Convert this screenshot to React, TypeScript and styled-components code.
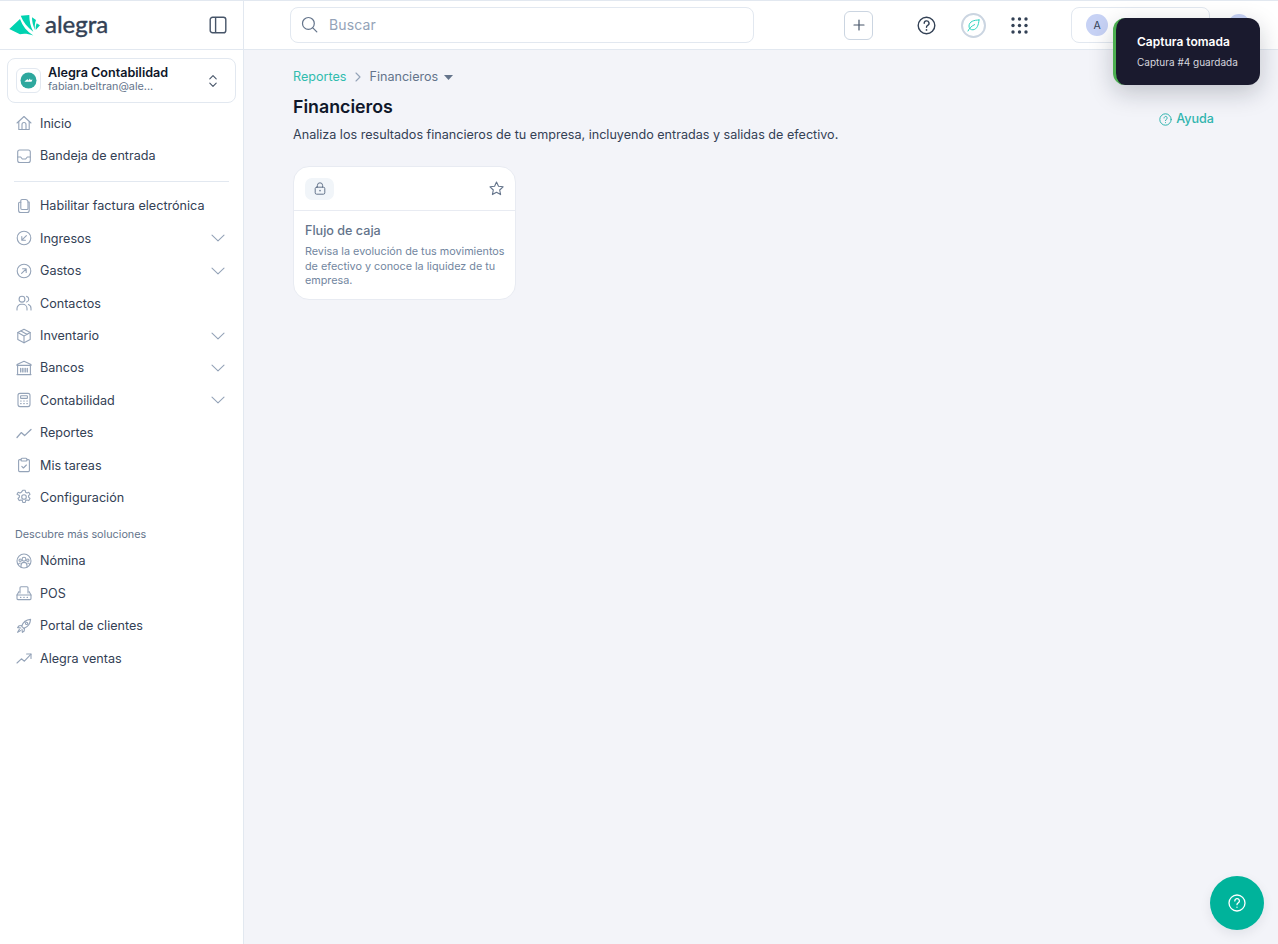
import React from "react";
import styled, { createGlobalStyle } from "styled-components";

const Global = createGlobalStyle`
  html, body { margin: 0; padding: 0; height: 100%; background: #f3f4f9; }
  body { font-family: Inter, "Liberation Sans", sans-serif; color: #334155; }
  * { box-sizing: border-box; }
  #root { height: 100%; }
`;

const Page = styled.div`
  position: relative;
  display: grid;
  grid-template-columns: 244px 1fr;
  height: 944px;
  overflow: hidden;
  border-top: 1px solid #e2e8f0;
`;

const Sidebar = styled.aside`
  background: #fff;
  border-right: 1px solid #e2e8f0;
  display: flex;
  flex-direction: column;
`;

const Brand = styled.div`
  height: 49px;
  flex: none;
  border-bottom: 1px solid #e2e8f0;
  display: flex;
  align-items: center;
  justify-content: space-between;
  padding: 0 16px 0 9px;
`;

const Logo = styled.div`
  display: flex;
  align-items: center;
  gap: 4px;
`;

const Wordmark = styled.span`
  font-family: Lato, sans-serif;
  font-size: 24px;
  font-weight: 400;
  color: #334155;
  line-height: 1;
  margin-top: -3px;
  -webkit-text-stroke: 0.4px #334155;
`;

const Company = styled.div`
  margin: 8px 7px 4px;
  height: 45px;
  border: 1px solid #e2e8f0;
  border-radius: 8px;
  display: flex;
  align-items: center;
  padding: 0 17px 0 8px;
  gap: 7px;
`;

const CompanyBadge = styled.div`
  width: 25px;
  height: 25px;
  border: 1px solid #e2e8f0;
  border-radius: 6px;
  display: flex;
  align-items: center;
  justify-content: center;
  flex: none;
`;

const CompanyText = styled.div`
  flex: 1;
  min-width: 0;
  display: flex;
  flex-direction: column;
  padding-bottom: 1px;
`;

const CompanyName = styled.span`
  font-size: 12.6px;
  font-weight: 600;
  line-height: 14px;
  color: #0f172a;
`;

const CompanyMail = styled.span`
  font-size: 10.8px;
  line-height: 13.5px;
  color: #64748b;
`;

const Row = styled.div`
  height: 32.4px;
  flex: none;
  display: flex;
  align-items: center;
  padding: 0 18px 0 16px;
  font-size: 12.6px;
  color: #334155;
`;

const RowIcon = styled.span`
  width: 16px;
  height: 16px;
  display: flex;
  align-items: center;
  justify-content: center;
  margin-right: 8px;
  flex: none;
  color: #94a3b8;
`;

const RowLabel = styled.span`
  flex: 1;
`;

const Divider = styled.hr`
  border: 0;
  border-top: 1px solid #e2e8f0;
  margin: 9px 14px 8px;
`;

const SectionLabel = styled.div`
  font-size: 10.8px;
  line-height: 14px;
  color: #64748b;
  padding: 14px 15px 3px;
`;

const Main = styled.main`
  display: flex;
  flex-direction: column;
  min-width: 0;
`;

const TopBar = styled.header`
  height: 49px;
  flex: none;
  background: #fff;
  border-bottom: 1px solid #e2e8f0;
  display: flex;
  align-items: center;
  padding-left: 46px;
`;

const Search = styled.div`
  width: 464px;
  height: 36px;
  border: 1px solid #e2e8f0;
  border-radius: 8px;
  display: flex;
  align-items: center;
  padding: 0 0 1px 10px;
  gap: 11px;
  font-size: 14px;
  color: #94a3b8;
  letter-spacing: 0.01em;
`;

const AddButton = styled.button`
  width: 29px;
  height: 29px;
  margin-left: 90px;
  padding: 0;
  border: 1px solid #cbd5e1;
  border-radius: 6px;
  background: #fff;
  color: #475569;
  display: flex;
  align-items: center;
  justify-content: center;
`;

const TopIcon = styled.span<{ $left: number }>`
  margin-left: ${(p) => p.$left}px;
  display: flex;
  align-items: center;
  justify-content: center;
`;

const LeafRing = styled.span`
  width: 25px;
  height: 25px;
  margin-left: 25px;
  border-radius: 50%;
  border: 2px solid #cbd5e1;
  display: flex;
  align-items: center;
  justify-content: center;
`;

const AccountBox = styled.div`
  width: 139px;
  height: 36px;
  margin-left: 43px;
  border: 1px solid #e2e8f0;
  border-radius: 8px;
  display: flex;
  align-items: center;
  padding-left: 14px;
`;

const Avatar = styled.span`
  width: 22px;
  height: 22px;
  border-radius: 50%;
  background: #c7d2f5;
  color: #334155;
  font-size: 10.5px;
  font-weight: 400;
  display: flex;
  align-items: center;
  justify-content: center;
`;

const UserAvatar = styled(Avatar)`
  margin-left: 18px;
`;

const Content = styled.div`
  padding: 19px 64px 0 49px;
`;

const Breadcrumb = styled.nav`
  display: flex;
  align-items: center;
  font-size: 12.6px;
  line-height: 16px;
  height: 16px;
`;

const CrumbLink = styled.span`
  color: #30bcae;
`;

const CrumbCurrent = styled.span`
  color: #64748b;
`;

const CrumbSep = styled.span`
  margin: 0 6.5px;
  display: flex;
  color: #94a3b8;
`;

const Title = styled.h1`
  margin: 10px 0 0;
  font-size: 17.8px;
  line-height: 24px;
  font-weight: 600;
  color: #0f172a;
`;

const DescRow = styled.div`
  display: flex;
  align-items: flex-start;
  justify-content: space-between;
`;

const Desc = styled.p`
  margin: 7px 0 0;
  font-size: 12.6px;
  line-height: 18px;
  color: #334155;
`;

const Help = styled.a`
  display: flex;
  align-items: center;
  gap: 4px;
  margin-top: -9px;
  font-size: 12.6px;
  font-weight: 500;
  line-height: 18px;
  color: #30b4ae;
`;

const Card = styled.article`
  margin-top: 22px;
  width: 223px;
  height: 134px;
  background: #fff;
  border: 1px solid #e8ebf2;
  border-radius: 16px;
  display: flex;
  flex-direction: column;
`;

const CardHead = styled.div`
  height: 44px;
  flex: none;
  border-bottom: 1px solid #e8ebf2;
  display: flex;
  align-items: center;
  justify-content: space-between;
  padding: 0 11px;
`;

const LockPill = styled.span`
  width: 29px;
  height: 22px;
  border-radius: 7px;
  background: #f1f5f9;
  display: flex;
  align-items: center;
  justify-content: center;
  color: #64748b;
`;

const Star = styled.span`
  display: flex;
  color: #64748b;
`;

const CardBody = styled.div`
  padding: 11px 10px 0 11px;
`;

const CardTitle = styled.h3`
  margin: 0;
  font-size: 12.6px;
  line-height: 18px;
  font-weight: 500;
  color: #64748b;
`;

const CardText = styled.p`
  margin: 5px 0 0;
  font-size: 10.8px;
  line-height: 14.6px;
  color: #7286a0;
`;

const Toast = styled.div`
  position: absolute;
  left: 1113px;
  top: 17px;
  width: 147px;
  height: 67px;
  background: #1a1a2e;
  border-left: 3px solid #4caf50;
  border-radius: 12px;
  padding: 15px 0 0 21px;
  box-shadow: 0 8px 24px rgba(15, 23, 42, 0.22);
`;

const ToastTitle = styled.div`
  font-size: 12px;
  line-height: 18px;
  font-weight: 600;
  color: #fff;
  white-space: nowrap;
`;

const ToastText = styled.div`
  margin-top: 4px;
  font-size: 10px;
  line-height: 14px;
  color: #d6d6de;
  white-space: nowrap;
`;

const Fab = styled.button`
  position: absolute;
  left: 1210px;
  top: 875px;
  width: 54px;
  height: 54px;
  padding: 0;
  border: 0;
  border-radius: 50%;
  background: #00b39b;
  color: #fff;
  display: flex;
  align-items: center;
  justify-content: center;
  box-shadow: 0 4px 12px rgba(15, 23, 42, 0.08);
`;

type IconProps = { children: React.ReactNode; size?: number; width?: number };
const Ico = ({ children, size = 16, width = 1.1 }: IconProps) => (
  <svg width={size} height={size} viewBox="0 0 16 16" fill="none" stroke="currentColor" strokeWidth={width} strokeLinecap="round" strokeLinejoin="round">
    {children}
  </svg>
);

const icons: Record<string, React.ReactNode> = {
  home: <Ico><path d="M1 8 8 1.5 15 8" /><path d="M2.8 6.5V14.5H13.2V6.5" /><path d="M6 14.5V9.5a2 2 0 0 1 4 0v5" /></Ico>,
  inbox: <Ico><rect x="1.7" y="2" width="12.6" height="12.5" rx="2" /><path d="M1.7 9h3l1.6 2h3.4l1.6-2h3" /></Ico>,
  docs: <Ico><path d="M6 1.5h3.5a2.5 2.5 0 0 1 2.5 2.5v6.5a1 1 0 0 1-1 1H6a1.2 1.2 0 0 1-1.2-1.2V2.7A1.2 1.2 0 0 1 6 1.5Z" /><path d="M12 4h1.2v8.5a2 2 0 0 1-2 2H6" /><path d="M4.8 4.2H3.6a1 1 0 0 0-1 1v7.3a2 2 0 0 0 2 2H6" /></Ico>,
  arrowIn: <Ico><circle cx="8" cy="8" r="6.8" /><path d="M10.4 5.6 5.8 10.2M5.8 6.6v3.6h3.6" /></Ico>,
  arrowOut: <Ico><circle cx="8" cy="8" r="6.8" /><path d="M5.6 10.4 10.2 5.8M6.6 5.8h3.6v3.6" /></Ico>,
  users: <Ico><circle cx="6" cy="4.2" r="2.9" /><path d="M1 15v-1.5a4.2 4.2 0 0 1 4.2-4.2h1.6A4.2 4.2 0 0 1 11 13.5V15" /><path d="M10.6 1.4a2.9 2.9 0 0 1 0 5.6M12.4 9.6A4 4 0 0 1 15 13.4V15" /></Ico>,
  box: <Ico><path d="M8 1.3 14.2 4.6v6.8L8 14.7 1.8 11.4V4.6Z" /><path d="M1.8 4.6 8 8l6.2-3.4M8 8v6.7M5 3l6.2 3.4" /></Ico>,
  bank: <Ico><path d="M8 1.2 15 4.4v1H1v-1Z" /><path d="M1 14.6h14M1.6 5.4v9.2M14.4 5.4v9.2" /><path d="M4.6 8.2v3.8M8 8.2v3.8M11.4 8.2v3.8M6.3 8.2v3.8M9.7 8.2v3.8" /></Ico>,
  calc: <Ico><rect x="2" y="1.4" width="12" height="13.2" rx="2" /><rect x="4.6" y="3.8" width="6.8" height="2.6" rx=".5" /><path d="M4.6 9h.6M7.7 9h.6M10.8 9h.6M4.6 11.6h.6M7.7 11.6h.6M10.8 11.6h.6" /></Ico>,
  chart: <Ico width={1.3}><path d="M1 12.5 5.2 7.6l3.4 3L15 4.5" /></Ico>,
  task: <Ico><path d="M5 2.6H3.6a1 1 0 0 0-1 1v10a1 1 0 0 0 1 1h8.8a1 1 0 0 0 1-1v-10a1 1 0 0 0-1-1H11" /><rect x="5" y="1.2" width="6" height="2.8" rx="1" /><path d="m5.8 9.4 1.6 1.6 3-3" /></Ico>,
  gear: <Ico><circle cx="8" cy="8" r="2.3" /><path d="M6.8 1.3h2.4l.4 1.9 1.4.7 1.8-.7 1.2 2.1-1.4 1.3v1.6l1.4 1.3-1.2 2.1-1.8-.7-1.4.7-.4 1.9H6.8l-.4-1.9-1.4-.7-1.8.7-1.2-2.1 1.4-1.3V6.6L1 5.3l1.2-2.1 1.8.7 1.4-.7Z" /></Ico>,
  people: <Ico><circle cx="8" cy="8" r="7" /><circle cx="8" cy="6.2" r="1.9" /><circle cx="4.2" cy="7.2" r="1.2" /><circle cx="11.8" cy="7.2" r="1.2" /><path d="M5 14v-1.6a3 3 0 0 1 6 0V14M2.4 11.4a2 2 0 0 1 1.8-1.4M13.6 11.4a2 2 0 0 0-1.8-1.4" /></Ico>,
  pos: <Ico><path d="M4 8V2.8a1 1 0 0 1 1-1h6a1 1 0 0 1 1 1V8" /><path d="M3 6.5 1 10v3.6a1 1 0 0 0 1 1h12a1 1 0 0 0 1-1V10l-2-3.5" /><path d="M1 10h14M4.5 12.4h.4M7.8 12.4h.4M11.1 12.4h.4" /></Ico>,
  rocket: <Ico><path d="M5.6 8.2C7 4.4 10 1.8 14.6 1.4 14.2 6 11.6 9 7.8 10.4Z" /><path d="M5.9 7.5 3 7.8 1.6 9.6l3.2.4M8.5 10.1 8.2 13l-1.8 1.4-.4-3.2" /><circle cx="10.6" cy="5.4" r="1.1" /><path d="M3.4 11.4 1.6 14.4l3-1.8" /></Ico>,
  trend: <Ico><path d="M1 13 5.4 8.8l3 2.4L15 4.2" /><path d="M10.6 4H15v4.4" /></Ico>,
};

const Chevron = () => (
  <svg width="14" height="8" viewBox="0 0 14 8" fill="none" stroke="#94a3b8" strokeWidth="1.1" strokeLinecap="round" strokeLinejoin="round">
    <path d="M1 1.2 7 6.8 13 1.2" />
  </svg>
);

const AlegraMark = () => (
  <svg width="32" height="23" viewBox="0 0 32 23" fill="#00d2b0">
    <path d="M.3 15 11 5C13.5 12 18 17.5 24.3 21.5 19 19.5 14 19.5 11 20.3Z" />
    <path d="M11.7 1.7 20.3 1C20.3 7 21.5 12.5 24.3 17.7 18.5 13.5 14 8 11.7 1.7Z" />
    <path d="M23 3.3 27 6C25.8 9 25.6 12.5 26 16 24 12 23 7.5 23 3.3Z" />
    <path d="M27.7 9.3 31 11.3 26.7 16C26.5 13.5 26.8 11.3 27.7 9.3Z" />
  </svg>
);

type Item = { label: string; icon: string; more?: boolean };
const NavRow = ({ label, icon, more }: Item) => (
  <Row>
    <RowIcon>{icons[icon]}</RowIcon>
    <RowLabel>{label}</RowLabel>
    {more && <Chevron />}
  </Row>
);

const first: Item[] = [
  { label: "Inicio", icon: "home" },
  { label: "Bandeja de entrada", icon: "inbox" },
];
const second: Item[] = [
  { label: "Habilitar factura electrónica", icon: "docs" },
  { label: "Ingresos", icon: "arrowIn", more: true },
  { label: "Gastos", icon: "arrowOut", more: true },
  { label: "Contactos", icon: "users" },
  { label: "Inventario", icon: "box", more: true },
  { label: "Bancos", icon: "bank", more: true },
  { label: "Contabilidad", icon: "calc", more: true },
  { label: "Reportes", icon: "chart" },
  { label: "Mis tareas", icon: "task" },
  { label: "Configuración", icon: "gear" },
];
const third: Item[] = [
  { label: "Nómina", icon: "people" },
  { label: "POS", icon: "pos" },
  { label: "Portal de clientes", icon: "rocket" },
  { label: "Alegra ventas", icon: "trend" },
];

export default function App() {
  return (
    <>
      <Global />
      <Page>
        <Sidebar>
          <Brand>
            <Logo>
              <AlegraMark />
              <Wordmark>alegra</Wordmark>
            </Logo>
            <svg width="18" height="18" viewBox="0 0 18 18" fill="none" stroke="#475569" strokeWidth="1.4">
              <rect x="1.2" y="1.2" width="15.6" height="15.6" rx="2.4" />
              <path d="M6.6 1.2v15.6" />
            </svg>
          </Brand>
          <Company>
            <CompanyBadge>
              <svg width="17" height="17" viewBox="0 0 17 17">
                <circle cx="8.5" cy="8.5" r="8" fill="#2ea89e" />
                <path d="M4.4 9.4 7.6 7l.6 1.4L10 6.4l.5 1.6 2-.4-1 2.2H5.6Z" fill="#fff" />
              </svg>
            </CompanyBadge>
            <CompanyText>
              <CompanyName>Alegra Contabilidad</CompanyName>
              <CompanyMail>fabian.beltran@ale...</CompanyMail>
            </CompanyText>
            <svg width="10" height="14" viewBox="0 0 10 14" fill="none" stroke="#475569" strokeWidth="1.1" strokeLinecap="round" strokeLinejoin="round">
              <path d="M1.8 4.8 5 1.6l3.2 3.2M1.8 9.2 5 12.4l3.2-3.2" />
            </svg>
          </Company>
          {first.map((i) => <NavRow key={i.label} {...i} />)}
          <Divider />
          {second.map((i) => <NavRow key={i.label} {...i} />)}
          <SectionLabel>Descubre más soluciones</SectionLabel>
          {third.map((i) => <NavRow key={i.label} {...i} />)}
        </Sidebar>
        <Main>
          <TopBar>
            <Search>
              <svg width="17" height="17" viewBox="0 0 17 17" fill="none" stroke="#64748b" strokeWidth="1.2" strokeLinecap="round">
                <circle cx="7.4" cy="7.4" r="5.9" />
                <path d="m11.8 11.8 4 4" />
              </svg>
              Buscar
            </Search>
            <AddButton aria-label="Crear">
              <svg width="12" height="12" viewBox="0 0 12 12" fill="none" stroke="currentColor" strokeWidth="1.2" strokeLinecap="round">
                <path d="M6 1v10M1 6h10" />
              </svg>
            </AddButton>
            <TopIcon $left={44}>
              <svg width="19" height="19" viewBox="0 0 19 19" fill="none" stroke="#334155" strokeWidth="1.4" strokeLinecap="round">
                <circle cx="9.5" cy="9.5" r="8.3" />
                <path d="M7.2 7.3a2.4 2.4 0 1 1 3.5 2.1c-.8.4-1.2.9-1.2 1.8" />
                <path d="M9.5 13.8v.1" strokeWidth="1.7" />
              </svg>
            </TopIcon>
            <LeafRing>
              <svg width="13" height="13" viewBox="0 0 13 13" fill="none" stroke="#2dd4bf" strokeWidth="1" strokeLinecap="round" strokeLinejoin="round">
                <path d="M12 1C7 1 2.2 2.4 2 7c-.1 2.4 1.8 4 4 3.8C10 10.4 11.6 6 12 1Z" />
                <path d="M1 12c1.4-3 3.6-5 6.6-6.4" />
              </svg>
            </LeafRing>
            <TopIcon $left={25}>
              <svg width="17" height="17" viewBox="0 0 17 17" fill="#334155">
                {[2, 8.5, 15].flatMap((y) => [2, 8.5, 15].map((x) => <circle key={`${x}-${y}`} cx={x} cy={y} r="1.7" />))}
              </svg>
            </TopIcon>
            <AccountBox><Avatar>A</Avatar></AccountBox>
            <UserAvatar />
          </TopBar>
          <Content>
            <Breadcrumb>
              <CrumbLink>Reportes</CrumbLink>
              <CrumbSep>
                <svg width="10" height="10" viewBox="0 0 10 10" fill="none" stroke="currentColor" strokeWidth="1.1" strokeLinecap="round" strokeLinejoin="round">
                  <path d="m3 1 4 4-4 4" />
                </svg>
              </CrumbSep>
              <CrumbCurrent>Financieros</CrumbCurrent>
              <svg width="9" height="5" viewBox="0 0 9 5" fill="#64748b" style={{ marginLeft: 6 }}>
                <path d="M0 0h9L4.5 5Z" />
              </svg>
            </Breadcrumb>
            <Title>Financieros</Title>
            <DescRow>
              <Desc>Analiza los resultados financieros de tu empresa, incluyendo entradas y salidas de efectivo.</Desc>
              <Help>
                <svg width="13" height="13" viewBox="0 0 13 13" fill="none" stroke="currentColor" strokeWidth="1" strokeLinecap="round">
                  <circle cx="6.5" cy="6.5" r="5.7" />
                  <path d="M5 5a1.6 1.6 0 1 1 2.4 1.4c-.6.3-.9.6-.9 1.2M6.5 9.6v.1" />
                </svg>
                Ayuda
              </Help>
            </DescRow>
            <Card>
              <CardHead>
                <LockPill>
                  <svg width="12" height="13" viewBox="0 0 12 13" fill="none" stroke="currentColor" strokeWidth="1" strokeLinecap="round">
                    <rect x="1.2" y="5.2" width="9.6" height="7" rx="1.4" />
                    <path d="M3.4 5.2V3.4a2.6 2.6 0 0 1 5.2 0v1.8" />
                    <path d="M6 8.6v.2" strokeWidth="1.5" />
                  </svg>
                </LockPill>
                <Star>
                  <svg width="15" height="15" viewBox="0 0 15 15" fill="none" stroke="currentColor" strokeWidth="1.1" strokeLinejoin="round">
                    <path d="m7.5 1 2 4.2 4.6.6-3.4 3.2.9 4.6-4.1-2.3-4.1 2.3.9-4.6L1 5.8l4.6-.6Z" />
                  </svg>
                </Star>
              </CardHead>
              <CardBody>
                <CardTitle>Flujo de caja</CardTitle>
                <CardText>Revisa la evolución de tus movimientos de efectivo y conoce la liquidez de tu empresa.</CardText>
              </CardBody>
            </Card>
          </Content>
        </Main>
        <Toast>
          <ToastTitle>Captura tomada</ToastTitle>
          <ToastText>Captura #4 guardada</ToastText>
        </Toast>
        <Fab aria-label="Ayuda">
          <svg width="18" height="18" viewBox="0 0 18 18" fill="none" stroke="currentColor" strokeWidth="1.3" strokeLinecap="round">
            <circle cx="9" cy="9" r="8" />
            <path d="M6.8 6.9a2.3 2.3 0 1 1 3.4 2c-.8.4-1.2.9-1.2 1.8M9 13.2v.1" />
          </svg>
        </Fab>
      </Page>
    </>
  );
}
